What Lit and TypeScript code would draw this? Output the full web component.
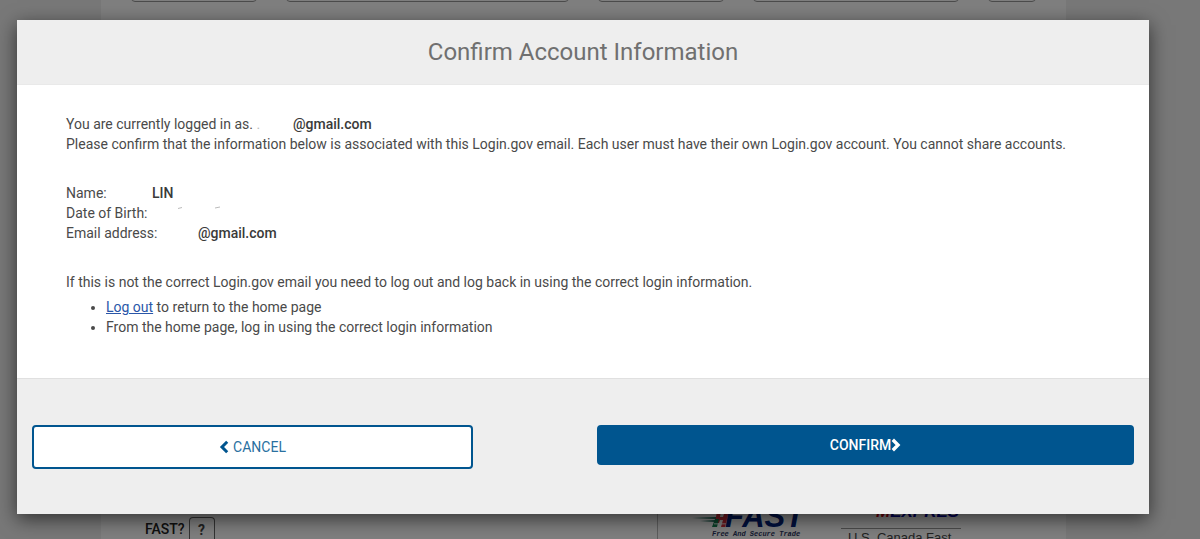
import { LitElement, html, css } from "lit";
import { customElement } from "lit/decorators.js";

/** The form page that lies dimmed behind the dialog. */
@customElement("application-page")
class ApplicationPage extends LitElement {
  static styles = css`
    :host { display: block; height: 100%; background: #f0f0f0; font: 14px/20px Roboto, sans-serif; color: #222; }
    * { box-sizing: border-box; }
    .sheet { height: 100%; margin: 0 134px 0 101px; background: #fff; display: flex; flex-direction: column; justify-content: space-between; overflow: hidden; }
    .fields { display: grid; grid-template-columns: 126fr 282fr 126fr 205fr 48fr; grid-template-rows: 2px; column-gap: 29px; padding: 0 30px; align-items: end; }
    .fields input { width: 100%; min-width: 0; height: 34px; border: 1px solid #999; border-radius: 4px; background: #fff; }
    .programs { display: grid; grid-template-columns: 555fr 409fr; height: 40px; align-items: start; }
    .question { display: flex; align-items: center; gap: 4px; padding: 18px 0 0 44px; font-weight: 500; }
    .help { width: 26px; height: 24px; border: solid #666; border-width: 1px 1px 0; border-radius: 4px 4px 0 0; background: #fff; font: 700 14px/20px Roboto, sans-serif; color: #444; padding: 0; }
    .logos { display: flex; gap: 30px; align-items: flex-end; border-left: 1px solid #bbb; padding-left: 32px; height: 40px; }
    .fast { width: 121px; height: 40px; flex: none; }
    .mexpres { width: 120px; height: 40px; flex: none; }
  `;

  render() {
    const fields = ["City", "Street address", "State", "Country", "Zip"];
    return html`
      <div class="sheet">
        <div class="fields">${fields.map((f) => html`<input type="text" aria-label=${f} />`)}</div>
        <div class="programs">
          <div class="question"><span>FAST?</span><button class="help" type="button">?</button></div>
          <div class="logos">
            <svg class="fast" viewBox="0 0 121 40" role="img" aria-label="FAST">
              <path d="M2 19l24-1v2zM10 22l16-1v2z" fill="#1c6a58" />
              <path d="M27 12h4l-1 6h3l2-6h4l-4 16h-4l2-7h-3l-1 3h-4z" fill="#d8303c" />
              <path d="M25 20h4l-2 8h-5z" fill="#148050" />
              <path d="M24 24h13l-.5 1.500H24z" fill="#fff" opacity=".6" />
              <text x="35" y="28" font-family="Liberation Sans, sans-serif" font-weight="700" font-style="italic" font-size="31" fill="#00207c">FAST</text>
              <text x="22" y="37" font-family="Liberation Mono, monospace" font-weight="700" font-style="italic" font-size="7" fill="#2a3560">Free And Secure Trade</text>
            </svg>
            <svg class="mexpres" viewBox="0 0 120 40">
              <text x="35" y="18" font-family="Liberation Sans, sans-serif" font-weight="700" font-style="italic" font-size="17" fill="#0000a0"><tspan fill="#d00010">M</tspan>EXPRES</text>
              <path d="M0 29.500h120" stroke="#999" stroke-width="1" />
              <text x="7" y="43" font-family="Liberation Sans, sans-serif" font-size="13" fill="#444">U.S. Canada Fast</text>
            </svg>
          </div>
        </div>
      </div>
    `;
  }
}

@customElement("confirm-dialog")
class ConfirmDialog extends LitElement {
  static styles = css`
    :host { display: block; font: 14px/20px Roboto, sans-serif; color: #4a4a4a; background: #fff; box-shadow: 0 5px 18px rgba(0, 0, 0, 0.6); }
    * { box-sizing: border-box; }
    header { background: #eee; border-bottom: 1px solid #e9e9e9; padding: 16px; text-align: center; }
    h1 { margin: 0; font-size: 24px; line-height: 32px; font-weight: 400; color: #707070; }
    main { padding: 29px 49px 41px; }
    p { margin: 0; }
    .block, dl { margin: 0 0 29px; }
    .row { display: flex; }
    dd { margin: 0; }
    .account { display: inline-block; width: 227px; }
    .name { width: 86px; }
    .birth { width: 110px; }
    .email { width: 132px; }
    b, dd { font-weight: 500; color: #3a3a3a; }
    .faint { color: #bbb; }
    .marks { display: block; width: 46px; height: 20px; }
    ul { margin: 5px 0 0; padding-left: 40px; }
    a { color: #2a56a8; text-decoration: underline; }
    footer { background: #eee; border-top: 1px solid #e0e0e0; padding: 46px 15px 45px; display: grid; grid-template-columns: 441fr 537fr; column-gap: 124px; align-items: start; }
    button { display: flex; align-items: center; justify-content: center; font: 14px/20px Roboto, sans-serif; border-radius: 4px; padding: 8px; border: 2px solid #00558f; }
    .cancel { background: #fff; color: #2a709f; gap: 4px; height: 44px; }
    .confirm { background: #00558f; color: #fff; font-weight: 500; height: 40px; }
    .chevron { width: 10px; height: 14px; color: #00558f; }
    .confirm .chevron { color: #fff; }
  `;

  render() {
    return html`
      <header><h1 id="title">Confirm Account Information</h1></header>
      <main>
        <div class="block">
          <p><span class="account">You are currently logged in as.<span class="faint"> .</span></span><b>@gmail.com</b></p>
          <p>Please confirm that the information below is associated with this Login.gov email. Each user must have their own Login.gov account. You cannot share accounts.</p>
        </div>
        <dl>
          <div class="row"><dt class="name">Name:</dt><dd>LIN</dd></div>
          <div class="row"><dt class="birth">Date of Birth:</dt><dd>
            <svg class="marks" viewBox="0 0 46 20" aria-hidden="true"><path d="M2 5.500l4-1M39 5l5-1" stroke="#bbb" fill="none" /></svg>
          </dd></div>
          <div class="row"><dt class="email">Email address:</dt><dd>@gmail.com</dd></div>
        </dl>
        <p>If this is not the correct Login.gov email you need to log out and log back in using the correct login information.</p>
        <ul>
          <li><a href="#logout">Log out</a> to return to the home page</li>
          <li>From the home page, log in using the correct login information</li>
        </ul>
      </main>
      <footer>
        <button class="cancel" type="button">
          <svg class="chevron" viewBox="0 0 10 14" aria-hidden="true"><path d="M8.200 1.800L3 7l5.200 5.200" fill="none" stroke="currentColor" stroke-width="3" /></svg>CANCEL
        </button>
        <button class="confirm" type="button">CONFIRM<svg class="chevron" viewBox="0 0 10 14" aria-hidden="true"><path d="M1.800 1.800L7 7l-5.200 5.200" fill="none" stroke="currentColor" stroke-width="3.400" /></svg></button>
      </footer>
    `;
  }
}

@customElement("app-root")
class AppRoot extends LitElement {
  static styles = css`
    :host { display: grid; height: 100vh; overflow: hidden; }
    .page, .backdrop { grid-area: 1 / 1; min-width: 0; min-height: 0; }
    .backdrop { z-index: 1; background: rgba(0, 0, 0, 0.5); padding: 20px 51px 0 17px; }
  `;

  render() {
    return html`
      <application-page class="page"></application-page>
      <div class="backdrop"><confirm-dialog role="dialog" aria-label="Confirm Account Information"></confirm-dialog></div>
    `;
  }
}
